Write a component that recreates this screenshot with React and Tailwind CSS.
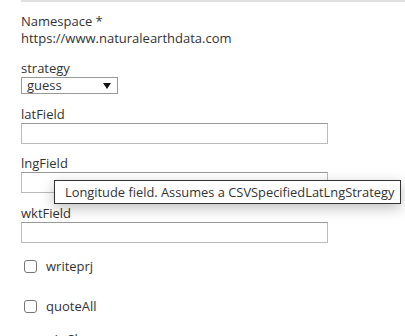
export default function App() {
  const font = { fontFamily: '"Open Sans", "Noto Sans", sans-serif' };
  return (
    <div className="relative w-[405px] h-[336px] overflow-hidden bg-white text-[#333] text-[13px] leading-[18px]" style={font}>
      <div className="ml-[21px] border-t-2 border-[#e0e0e0]" />
      <div className="pl-[21px] pt-[10px] flex flex-col">
        <div>Namespace *</div>
        <div className="mt-[-1px]">https://www.naturalearthdata.com</div>
        <div className="mt-[12px]">strategy</div>
        <div className="mt-0 w-[97px] h-[17px] border border-[#999] flex items-center justify-between pl-[5px] pr-[6px]">
          <span className="leading-[15px]">guess</span>
          <svg width="8" height="6" viewBox="0 0 8 6"><path d="M0 0 L8 0 L4 6 Z" fill="#111" /></svg>
        </div>
        <div className="mt-[11px]">latField</div>
        <div className="mt-0 w-[307px] h-[21px] border border-[#bbb] border-t-[#999]" />
        <div className="mt-[10px]">lngField</div>
        <div className="mt-0 w-[307px] h-[21px] border border-[#bbb] border-t-[#999]" />
        <div className="mt-[11px]">wktField</div>
        <div className="mt-0 w-[307px] h-[21px] border border-[#bbb] border-t-[#999]" />
        <label className="mt-[14px] flex items-center gap-[9px] pl-[3px]">
          <span className="w-[13px] h-[13px] border border-[#777] rounded-[3px] bg-white" />
          <span>writeprj</span>
        </label>
        <label className="mt-[22px] flex items-center gap-[9px] pl-[3px]">
          <span className="w-[13px] h-[13px] border border-[#777] rounded-[3px] bg-white" />
          <span>quoteAll</span>
        </label>
        <div className="mt-[15px] pl-[12px]">useLcSl</div>
      </div>
      <div className="absolute left-[54px] top-[180px] w-[347px] h-[24px] pl-[10px] flex items-center border border-[#333] bg-white whitespace-nowrap text-[12.85px] shadow-[0_4px_14px_rgba(0,0,0,0.25)]">
        Longitude field. Assumes a CSVSpecifiedLatLngStrategy
      </div>
    </div>
  );
}
